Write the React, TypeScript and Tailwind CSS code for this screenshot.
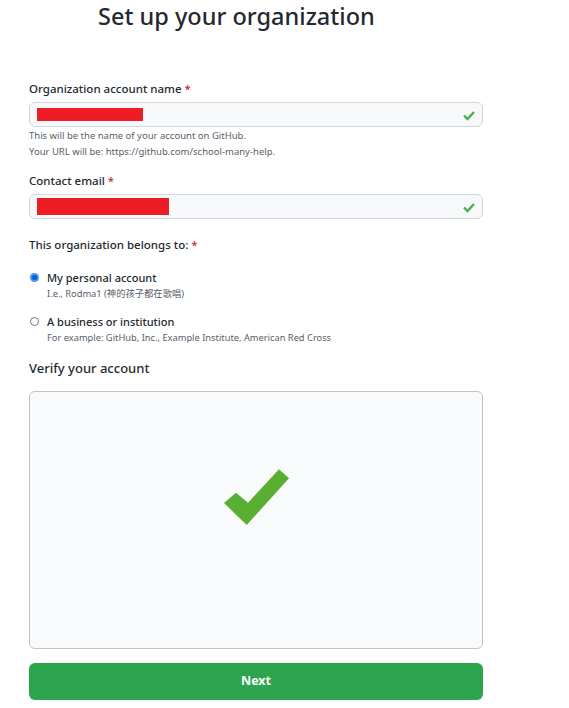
import React from 'react';

const font = { fontFamily: '"Noto Sans", "Noto Sans CJK SC", sans-serif' };

function SmallCheck() {
  return (
    <svg width="14" height="14" viewBox="0 0 14 14">
      <polyline points="2,7.5 5.5,11 12,4" fill="none" stroke="#4cae4f" strokeWidth="2.4" />
    </svg>
  );
}

function Field({ label, barWidth, barHeight }: { label: string; barWidth: number; barHeight: number }) {
  return (
    <div>
      <label className="block text-[11.5px] leading-[16px] font-medium text-[#24292f]">
        {label} <span className="text-[#cf222e]">*</span>
      </label>
      <div className="mt-[5px] h-[25px] flex items-center justify-between rounded-[6px] border border-[#d0d7de] bg-[#f6f8fa] pl-[7px] pr-[6px]">
        <div className="bg-[#ee1c25]" style={{ width: barWidth, height: barHeight }} />
        <SmallCheck />
      </div>
    </div>
  );
}

function Radio({ checked, title, note }: { checked?: boolean; title: string; note: string }) {
  return (
    <div className="flex gap-[8px]">
      <div className="pt-[3px] pl-[1px]">
        {checked ? (
          <div className="w-[9px] h-[9px] rounded-full bg-[#4493f8] flex items-center justify-center">
            <div className="w-[5px] h-[5px] rounded-full bg-[#0b5cd5]" />
          </div>
        ) : (
          <div className="w-[9px] h-[9px] rounded-full border border-[#6e7781] bg-white" />
        )}
      </div>
      <div>
        <div className="text-[11px] leading-[16px] font-medium text-[#24292f]">{title}</div>
        <div className="text-[9.3px] leading-[15px] text-[#57606a]">{note}</div>
      </div>
    </div>
  );
}

export default function App() {
  return (
    <div className="bg-white min-h-screen" style={font}>
      <div className="w-[454px] ml-[29px]">
        <h1 className="text-[23.5px] leading-[33px] font-medium text-[#24292f] pl-[69px]">
          Set up your organization
        </h1>

        <div className="mt-[48px]">
          <Field label="Organization account name" barWidth={106} barHeight={13} />
          <div className="mt-[1px] text-[9.5px] leading-[16px] text-[#57606a]">
            <p>This will be the name of your account on GitHub.</p>
            <p>Your URL will be: https://github.com/school-many-help.</p>
          </div>
        </div>

        <div className="mt-[13px]">
          <Field label="Contact email" barWidth={132} barHeight={17} />
        </div>

        <div className="mt-[18px] text-[11.5px] leading-[16px] font-medium text-[#24292f]">
          This organization belongs to: <span className="text-[#cf222e]">*</span>
        </div>

        <div className="mt-[17px] flex flex-col gap-[13px]">
          <Radio checked title="My personal account" note="I.e., Rodma1 (神的孩子都在歌唱)" />
          <Radio title="A business or institution" note="For example: GitHub, Inc., Example Institute, American Red Cross" />
        </div>

        <h2 className="mt-[14px] text-[13px] leading-[18px] font-medium text-[#24292f]">Verify your account</h2>

        <div className="mt-[14px] h-[258px] rounded-[6px] border border-[#c4c4c4] bg-[#f9fafb] flex items-center justify-center">
          <svg width="67" height="57" viewBox="0 0 67 57" className="mb-[46px]">
            <polygon fill="#5aaf32" points="1,34 13,23.7 25,33.7 56,0.3 66,9.3 23.7,56" />
          </svg>
        </div>

        <button className="mt-[14px] w-full h-[37px] rounded-[6px] bg-[#2da44e] text-white text-[12.5px] font-bold">
          Next
        </button>
      </div>
    </div>
  );
}
